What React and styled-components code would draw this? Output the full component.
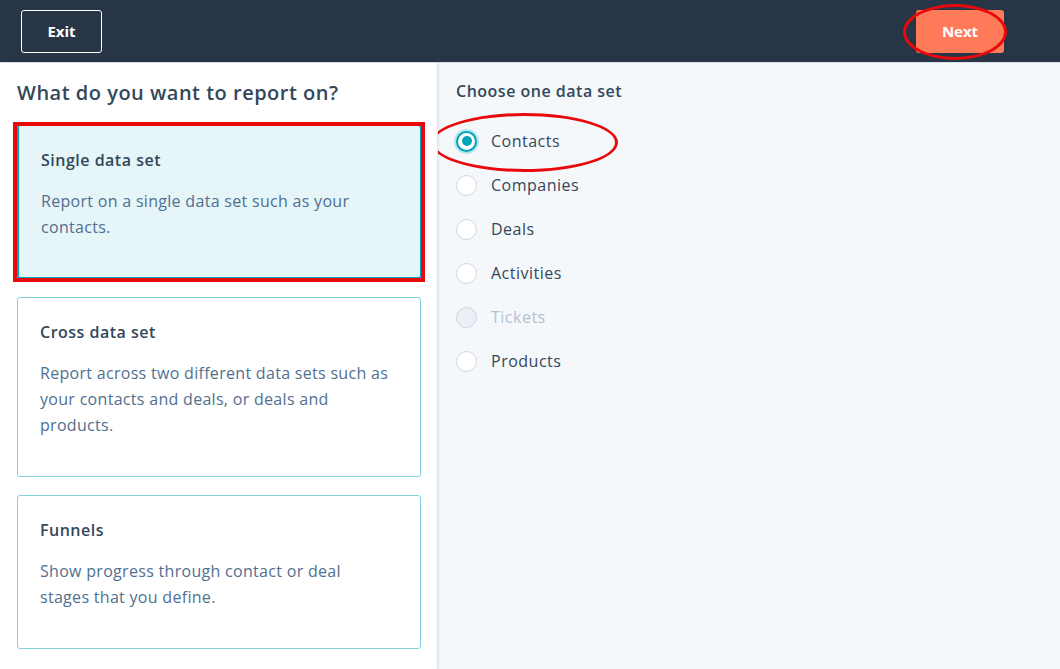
import React from 'react';
import styled, { createGlobalStyle } from 'styled-components';

const GlobalStyle = createGlobalStyle`
  html, body {
    margin: 0;
    padding: 0;
    background: #ffffff;
  }
  body {
    font-family: 'Open Sans', 'Lato', sans-serif;
    color: #33475b;
    -webkit-font-smoothing: antialiased;
  }
`;

const reportTypes = [
  {
    title: 'Single data set',
    text: 'Report on a single data set such as your contacts.',
    selected: true,
  },
  {
    title: 'Cross data set',
    text: 'Report across two different data sets such as your contacts and deals, or deals and products.',
  },
  {
    title: 'Funnels',
    text: 'Show progress through contact or deal stages that you define.',
  },
];

const dataSets = [
  { label: 'Contacts', checked: true },
  { label: 'Companies' },
  { label: 'Deals' },
  { label: 'Activities' },
  { label: 'Tickets', disabled: true },
  { label: 'Products' },
];

const App = () => {
  return (
    <>
      <GlobalStyle />
      <Page>
        <TopBar>
          <ExitButton>Exit</ExitButton>
          <NextWrap>
            <NextButton>Next</NextButton>
            <Ring style={{ left: -13, right: -3, top: -6, bottom: -7 }} />
          </NextWrap>
        </TopBar>

        <Body>
          <LeftPanel>
            <Heading>What do you want to report on?</Heading>
            <CardList>
              {reportTypes.map((type) => (
                <Card key={type.title} $selected={type.selected}>
                  <CardTitle>{type.title}</CardTitle>
                  <CardText>{type.text}</CardText>
                  {type.selected && <Frame />}
                </Card>
              ))}
            </CardList>
          </LeftPanel>

          <RightPanel>
            <SubHeading>Choose one data set</SubHeading>
            <RadioList>
              {dataSets.map((item) => (
                <RadioRow key={item.label} $disabled={item.disabled}>
                  <RadioCircle $checked={item.checked} $disabled={item.disabled} />
                  <RadioLabel $disabled={item.disabled}>{item.label}</RadioLabel>
                  {item.checked && (
                    <Ring style={{ left: -25, width: 181, top: -6, height: 53 }} />
                  )}
                </RadioRow>
              ))}
            </RadioList>
          </RightPanel>
        </Body>
      </Page>
    </>
  );
};

const Page = styled.div`
  display: flex;
  flex-direction: column;
  width: 1060px;
  height: 669px;
  overflow: hidden;
`;

const TopBar = styled.header`
  display: flex;
  align-items: center;
  justify-content: space-between;
  height: 62px;
  padding: 0 56px 0 21px;
  background: #283546;
  border-bottom: 1px solid #dbe1e8;
  flex-shrink: 0;
`;

const ExitButton = styled.button`
  width: 81px;
  height: 43px;
  background: transparent;
  border: 1px solid #ffffff;
  border-radius: 3px;
  color: #ffffff;
  font-family: 'Open Sans', sans-serif;
  font-weight: 700;
  font-size: 15px;
  cursor: pointer;
`;

const NextWrap = styled.div`
  position: relative;
`;

const NextButton = styled.button`
  width: 88px;
  height: 43px;
  background: #ff7a59;
  border: none;
  border-radius: 3px;
  color: #ffffff;
  font-family: 'Open Sans', sans-serif;
  font-weight: 700;
  font-size: 15px;
  cursor: pointer;
`;

/* red call-out marks drawn over the controls */
const Ring = styled.span`
  position: absolute;
  border: 3px solid #e8090d;
  border-radius: 50%;
  pointer-events: none;
`;

const Frame = styled.span`
  position: absolute;
  left: -6px;
  right: -5px;
  top: -4px;
  bottom: -5px;
  border: 4px solid #e8090d;
  pointer-events: none;
`;

const Body = styled.div`
  display: flex;
  flex: 1;
  min-height: 0;
`;

const LeftPanel = styled.section`
  width: 438px;
  padding: 16px 17px 0;
  box-sizing: border-box;
  background: #ffffff;
  border-right: 1px solid #dfe3eb;
  box-shadow: 1px 0 3px rgba(45, 62, 80, 0.08);
  position: relative;
  z-index: 1;
`;

const Heading = styled.h1`
  margin: 0 0 18px;
  font-size: 20px;
  line-height: 28px;
  font-weight: 600;
  letter-spacing: 0.5px;
  color: #33475b;
`;

const CardList = styled.div`
  display: flex;
  flex-direction: column;
  gap: 18px;
  width: 404px;
`;

const Card = styled.div`
  position: relative;
  padding: 22px 28px ${(p) => (p.$selected ? '37px' : '38px')} 22px;
  border: 1px solid ${(p) => (p.$selected ? '#00a4bd' : '#7fd1de')};
  border-left-width: ${(p) => (p.$selected ? '2px' : '1px')};
  border-bottom-width: ${(p) => (p.$selected ? '2px' : '1px')};
  border-radius: 3px;
  background: ${(p) => (p.$selected ? '#e5f5f8' : '#ffffff')};
`;

const CardTitle = styled.h2`
  margin: 0 0 16px;
  font-size: 16px;
  line-height: 24px;
  font-weight: 600;
  letter-spacing: 0.5px;
  color: #33475b;
`;

const CardText = styled.p`
  margin: 0;
  font-size: 16px;
  line-height: 26px;
  letter-spacing: 0.3px;
  color: #516f90;
`;

const RightPanel = styled.section`
  flex: 1;
  padding: 16px 18px 0;
  background: #f5f8fa;
`;

const SubHeading = styled.h2`
  margin: 0 0 16px;
  font-size: 16px;
  line-height: 24px;
  font-weight: 600;
  letter-spacing: 0.5px;
  color: #33475b;
`;

const RadioList = styled.div`
  display: flex;
  flex-direction: column;
`;

const RadioRow = styled.label`
  position: relative;
  display: flex;
  align-items: center;
  gap: 14px;
  height: 44px;
  cursor: ${(p) => (p.$disabled ? 'default' : 'pointer')};
`;

const RadioCircle = styled.span`
  position: relative;
  width: 21px;
  height: 21px;
  box-sizing: border-box;
  border-radius: 50%;
  border: ${(p) => (p.$checked ? '2px solid #00a4bd' : '1px solid #cbd6e2')};
  background: ${(p) => (p.$disabled ? '#eaf0f6' : '#ffffff')};
  box-shadow: ${(p) => (p.$checked ? '0 0 0 2px rgba(0, 164, 189, 0.25)' : 'none')};
  flex-shrink: 0;

  &::after {
    content: '';
    display: ${(p) => (p.$checked ? 'block' : 'none')};
    position: absolute;
    left: 3.5px;
    top: 3.5px;
    width: 10px;
    height: 10px;
    border-radius: 50%;
    background: #00a4bd;
  }
`;

const RadioLabel = styled.span`
  font-size: 16px;
  letter-spacing: 0.5px;
  color: ${(p) => (p.$disabled ? '#b0c1d4' : '#33475b')};
`;

export default App;
